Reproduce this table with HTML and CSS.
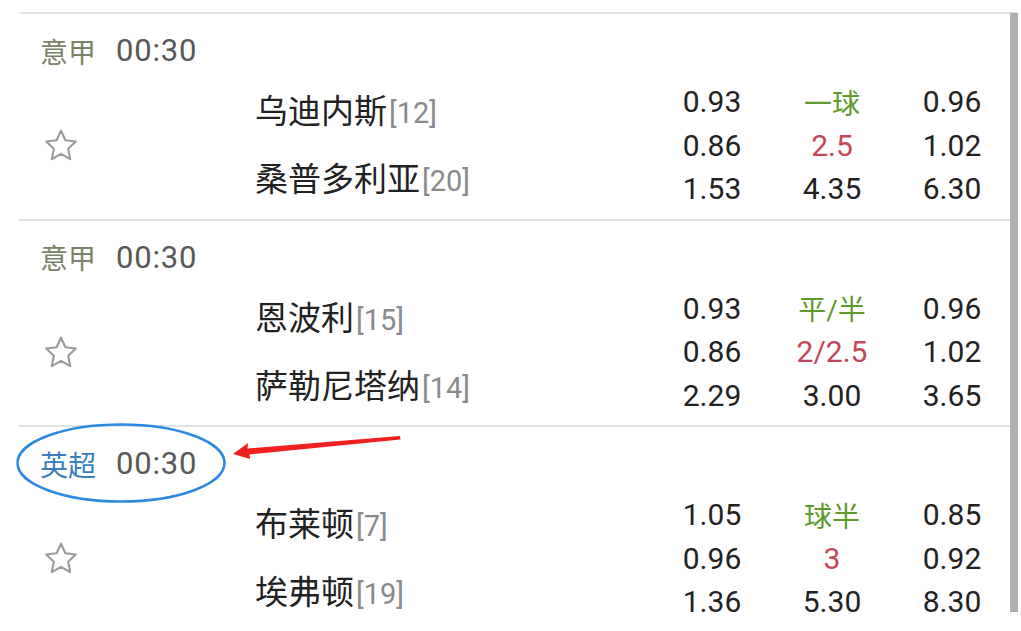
FILE: index.html
```html
<!DOCTYPE html>
<html lang="zh">
<head>
<meta charset="utf-8">
<link rel="stylesheet" href="styles.css">
</head>
<body>
<div class="page">
  <div class="list">
    <div class="match">
      <div class="head"><span class="league">意甲</span><span class="time">00:30</span></div>
      <div class="body">
        <div class="fav"><svg class="star" viewBox="0 0 36 36"><path d="M18 3.5 L22.2 12.6 L32 13.8 L24.8 20.6 L26.7 30.4 L18 25.5 L9.3 30.4 L11.2 20.6 L4 13.8 L13.8 12.6 Z"/></svg></div>
        <div class="teams">
          <div class="team">乌迪内斯<span class="rank">[12]</span></div>
          <div class="team">桑普多利亚<span class="rank">[20]</span></div>
        </div>
        <div class="odds">
          <span>0.93</span><span class="hcp">一球</span><span>0.96</span>
          <span>0.86</span><span class="ou">2.5</span><span>1.02</span>
          <span>1.53</span><span>4.35</span><span>6.30</span>
        </div>
      </div>
    </div>
    <div class="match">
      <div class="head"><span class="league">意甲</span><span class="time">00:30</span></div>
      <div class="body">
        <div class="fav"><svg class="star" viewBox="0 0 36 36"><path d="M18 3.5 L22.2 12.6 L32 13.8 L24.8 20.6 L26.7 30.4 L18 25.5 L9.3 30.4 L11.2 20.6 L4 13.8 L13.8 12.6 Z"/></svg></div>
        <div class="teams">
          <div class="team">恩波利<span class="rank">[15]</span></div>
          <div class="team">萨勒尼塔纳<span class="rank">[14]</span></div>
        </div>
        <div class="odds">
          <span>0.93</span><span class="hcp">平/半</span><span>0.96</span>
          <span>0.86</span><span class="ou">2/2.5</span><span>1.02</span>
          <span>2.29</span><span>3.00</span><span>3.65</span>
        </div>
      </div>
    </div>
    <div class="match">
      <div class="head"><span class="league epl">英超</span><span class="time">00:30</span></div>
      <div class="body">
        <div class="fav"><svg class="star" viewBox="0 0 36 36"><path d="M18 3.5 L22.2 12.6 L32 13.8 L24.8 20.6 L26.7 30.4 L18 25.5 L9.3 30.4 L11.2 20.6 L4 13.8 L13.8 12.6 Z"/></svg></div>
        <div class="teams">
          <div class="team">布莱顿<span class="rank">[7]</span></div>
          <div class="team">埃弗顿<span class="rank">[19]</span></div>
        </div>
        <div class="odds">
          <span>1.05</span><span class="hcp">球半</span><span>0.85</span>
          <span>0.96</span><span class="ou">3</span><span>0.92</span>
          <span>1.36</span><span>5.30</span><span>8.30</span>
        </div>
      </div>
    </div>
  </div>
  <div class="scrollbar"></div>
  <svg class="annot" viewBox="0 0 1021 631" width="1021" height="631">
    <ellipse cx="121" cy="463" rx="103.5" ry="38.5" fill="none" stroke="#2b8ae0" stroke-width="2.5"/>
    <polygon points="233,454 248,443 247.5,448.5 400,436 400.5,439.5 249.5,454.5 250,459" fill="#f02020"/>
  </svg>
</div>
</body>
</html>
```
FILE: styles.css
```css
* { box-sizing: border-box; }
html, body { margin: 0; padding: 0; background: #fff; }
body {
  font-family: Roboto, "Noto Sans CJK SC", sans-serif;
  color: #222;
  overflow: hidden;
}
.page {
  position: relative;
  width: 1021px;
  height: 631px;
  overflow: hidden;
  padding-top: 12px;
}
.list {
  margin-left: 19px;
  margin-right: 4px;
}
.match {
  border-top: 2px solid #e2e2e2;
  height: 206.5px;
  display: flex;
  flex-direction: column;
}
.head {
  height: 72px;
  padding-top: 1px;
  display: flex;
  align-items: center;
  padding-left: 21px;
  font-size: 28px;
}
.league { color: #7b8366; margin-right: 20px; }
.league.epl { color: #3b7dbd; }
.time { color: #585858; font-size: 31px; letter-spacing: 0.8px; }
.body {
  height: 118px;
  display: flex;
  align-items: center;
}
.fav {
  width: 236px;
  padding-left: 23px;
  display: flex;
  align-items: center;
  padding-top: 2px;
}
.star {
  width: 38px;
  height: 38px;
  fill: none;
  stroke: #9a9a9a;
  stroke-width: 2;
  stroke-linejoin: round;
}
.teams {
  flex: 1;
  display: flex;
  flex-direction: column;
  padding-top: 2px;
}
.team {
  height: 68px;
  line-height: 68px;
  font-size: 33px;
  color: #222;
  white-space: nowrap;
}
.rank {
  font-size: 29px;
  color: #8a8a8a;
  margin-left: 2px;
}
.odds {
  width: 360px;
  margin-right: 5px;
  display: grid;
  grid-template-columns: repeat(3, 120px);
  grid-auto-rows: 43.5px;
  align-items: center;
  justify-items: center;
  font-size: 30px;
  color: #222;
}
.odds .hcp { color: #5f9a2c; font-size: 28px; }
.odds .ou { color: #c2475a; }
.scrollbar {
  position: absolute;
  left: 1010px;
  top: 13px;
  width: 8px;
  height: 599px;
  background: #b0b0b0;
}
.annot {
  position: absolute;
  left: 0;
  top: 0;
  pointer-events: none;
}
```
